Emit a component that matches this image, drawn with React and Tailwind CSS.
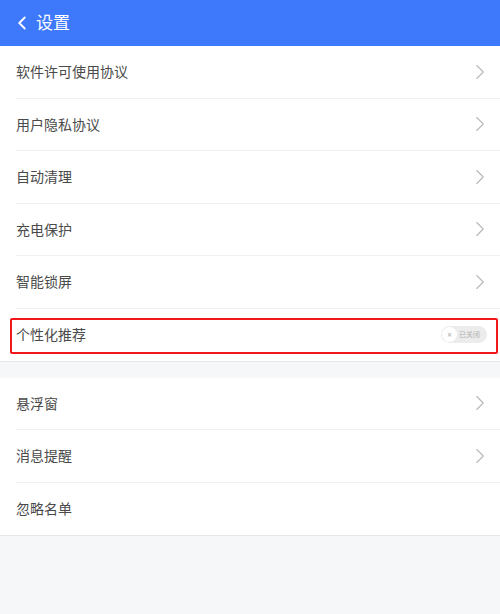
import { ChevronLeft, ChevronRight } from 'lucide-react'

const GROUP_ONE = ['软件许可使用协议', '用户隐私协议', '自动清理', '充电保护', '智能锁屏']
const GROUP_TWO = [
  { label: '悬浮窗', arrow: true },
  { label: '消息提醒', arrow: true },
  { label: '忽略名单', arrow: false },
]

function Row({ label, arrow = true, last = false }) {
  return (
    <div className="h-[52.5px] pl-4 bg-white">
      <div className={`h-full flex items-center justify-between pr-[7px] ${last ? '' : 'border-b border-[#f1f1f1]'}`}>
        <span className="text-[14px] text-[#4a4a4a]">{label}</span>
        {arrow && <ChevronRight size={26} strokeWidth={1} className="text-[#b8b8b8]" />}
      </div>
    </div>
  )
}

export default function App() {
  return (
    <div className="w-[500px] h-[614px] bg-[#f6f7f9] font-['Noto_Sans','Noto_Sans_CJK_SC',sans-serif]">
      <div className="h-[46px] bg-[#3e78fb] flex items-center pl-[11px] text-white">
        <ChevronLeft size={22} strokeWidth={2} />
        <span className="ml-[3px] text-[17px]">设置</span>
      </div>

      {GROUP_ONE.map((label) => (
        <Row key={label} label={label} />
      ))}

      {/* 个性化推荐 */}
      <div className="h-[53px] bg-white pl-4 border-b border-[#e6e6e6] relative">
        <div className="h-full flex items-center justify-between pr-[13px]">
          <span className="text-[14px] text-[#4a4a4a]">个性化推荐</span>
          <div className="w-[46px] h-[17px] rounded-full bg-[#ececec] flex items-center pl-[1px]">
            <div className="w-[15px] h-[15px] rounded-full bg-white flex items-center justify-center text-[8px] leading-none text-[#aaa]">×</div>
            <span className="ml-[2px] text-[7px] leading-none text-[#b0b0b0]">已关闭</span>
          </div>
        </div>
        <div className="absolute left-[10px] right-[2px] top-[9px] h-[36px] border-2 border-[#f01818] rounded-[2px]" />
      </div>

      <div className="h-[16px]" />

      <div className="border-b border-[#e6e6e6]">
        {GROUP_TWO.map((it, i) => (
          <Row key={it.label} label={it.label} arrow={it.arrow} last={i === GROUP_TWO.length - 1} />
        ))}
      </div>
    </div>
  )
}
